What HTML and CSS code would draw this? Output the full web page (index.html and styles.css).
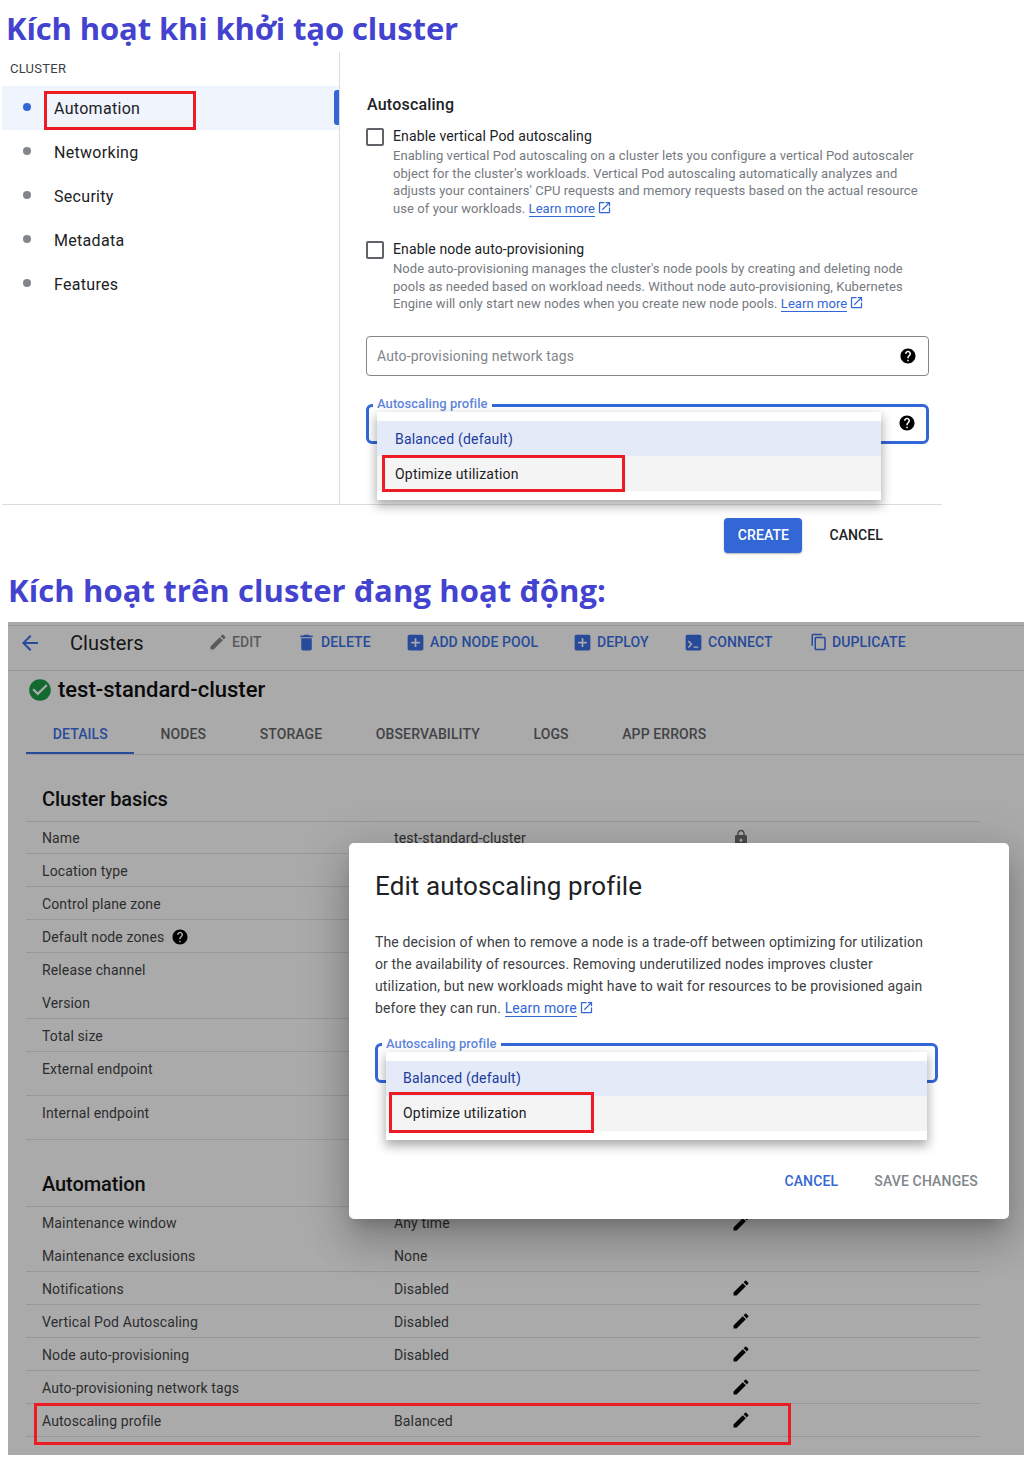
FILE: index.html
```html
<!doctype html>
<html>
    <head>
        <title>Autoscaling profile</title>
        <meta charset="utf-8" />
        <link rel="stylesheet" href="styles.css">
    </head>
    <body>
        <svg class="defs" width="0" height="0">
            <symbol id="i-edit" viewBox="0 0 24 24"><path d="M3 17.25V21h3.75L17.81 9.94l-3.75-3.75L3 17.25zM20.71 7.04a1 1 0 0 0 0-1.41l-2.34-2.34a1 1 0 0 0-1.41 0l-1.83 1.83 3.75 3.75 1.83-1.83z"/></symbol>
            <symbol id="i-delete" viewBox="0 0 24 24"><path d="M6 19c0 1.1.9 2 2 2h8c1.1 0 2-.9 2-2V7H6v12zM19 4h-3.5l-1-1h-5l-1 1H5v2h14V4z"/></symbol>
            <symbol id="i-add" viewBox="0 0 24 24"><path d="M19 3H5c-1.11 0-2 .9-2 2v14c0 1.1.89 2 2 2h14c1.1 0 2-.9 2-2V5c0-1.1-.9-2-2-2zm-2 10h-4v4h-2v-4H7v-2h4V7h2v4h4v2z"/></symbol>
            <symbol id="i-term" viewBox="0 0 24 24"><path fill-rule="evenodd" d="M5 3h14c1.1 0 2 .9 2 2v14c0 1.1-.9 2-2 2H5c-1.1 0-2-.9-2-2V5c0-1.1.9-2 2-2zm.5 8l3 3-3 3 1.200 1.200 4.200-4.200-4.200-4.200L5.500 11zM12 16.500V18h5.500v-1.500H12z"/></symbol>
            <symbol id="i-copy" viewBox="0 0 24 24"><path d="M16 1H4c-1.1 0-2 .9-2 2v14h2V3h12V1zm3 4H8c-1.1 0-2 .9-2 2v14c0 1.1.9 2 2 2h11c1.1 0 2-.9 2-2V7c0-1.1-.9-2-2-2zm0 16H8V7h11v14z"/></symbol>
            <symbol id="i-help" viewBox="0 0 24 24"><path d="M12 2C6.48 2 2 6.48 2 12s4.48 10 10 10 10-4.48 10-10S17.52 2 12 2zm1 17h-2v-2h2v2zm2.070-7.750l-.9.920C13.450 12.900 13 13.500 13 15h-2v-.5c0-1.100.450-2.100 1.170-2.830l1.240-1.260c.37-.36.590-.86.590-1.410 0-1.100-.9-2-2-2s-2 .9-2 2H8c0-2.210 1.790-4 4-4s4 1.790 4 4c0 .88-.36 1.680-.93 2.250z"/></symbol>
            <symbol id="i-open" viewBox="0 0 24 24"><path d="M19 19H5V5h7V3H5c-1.110 0-2 .9-2 2v14c0 1.100.89 2 2 2h14c1.100 0 2-.9 2-2v-7h-2v7zM14 3v2h3.590l-9.830 9.830 1.410 1.410L19 6.410V10h2V3h-7z"/></symbol>
            <symbol id="i-lock" viewBox="0 0 24 24"><path d="M18 8h-1V6c0-2.760-2.240-5-5-5S7 3.240 7 6v2H6c-1.100 0-2 .9-2 2v10c0 1.100.9 2 2 2h12c1.100 0 2-.9 2-2V10c0-1.100-.9-2-2-2zm-6 9c-1.100 0-2-.9-2-2s.9-2 2-2 2 .9 2 2-.9 2-2 2zm3.100-9H8.900V6c0-1.710 1.390-3.100 3.100-3.100 1.710 0 3.100 1.390 3.100 3.100v2z"/></symbol>
            <symbol id="i-back" viewBox="0 0 24 24"><path d="M20 11H7.830l5.590-5.590L12 4l-8 8 8 8 1.410-1.410L7.830 13H20v-2z"/></symbol>
            <symbol id="i-check" viewBox="0 0 24 24"><path d="M12 2C6.480 2 2 6.480 2 12s4.480 10 10 10 10-4.480 10-10S17.520 2 12 2zm-2 15l-5-5 1.410-1.410L10 14.170l7.590-7.590L19 8l-9 9z"/></symbol>
        </svg>

        <h1 class="caption caption-first">Kích hoạt khi khởi tạo cluster</h1>

        <section class="create">
            <aside class="side">
                <div class="side-title">CLUSTER</div>
                <ul class="side-nav">
                    <li class="side-item active"><span class="dot"></span>Automation<span class="mark mark-nav"></span></li>
                    <li class="side-item"><span class="dot"></span>Networking</li>
                    <li class="side-item"><span class="dot"></span>Security</li>
                    <li class="side-item"><span class="dot"></span>Metadata</li>
                    <li class="side-item"><span class="dot"></span>Features</li>
                </ul>
            </aside>
            <div class="form">
                <h2 class="form-title">Autoscaling</h2>
                <div class="check">
                    <span class="box"></span>
                    <div>
                        <div class="check-label">Enable vertical Pod autoscaling</div>
                        <p class="check-desc"><span>Enabling vertical Pod autoscaling on a cluster lets you configure a vertical Pod autoscaler object for the cluster's workloads. Vertical Pod autoscaling automatically analyzes and adjusts your containers' CPU requests and memory requests based on the actual resource use of your workloads.</span> <a class="learn">Learn more</a><svg class="icon open"><use href="#i-open"/></svg></p>
                    </div>
                </div>
                <div class="check check-second">
                    <span class="box"></span>
                    <div>
                        <div class="check-label">Enable node auto-provisioning</div>
                        <p class="check-desc"><span>Node auto-provisioning manages the cluster's node pools by creating and deleting node pools as needed based on workload needs. Without node auto-provisioning, Kubernetes Engine will only start new nodes when you create new node pools.</span> <a class="learn">Learn more</a><svg class="icon open"><use href="#i-open"/></svg></p>
                    </div>
                </div>
                <div class="field">
                    <span class="placeholder">Auto-provisioning network tags</span>
                    <svg class="icon help"><use href="#i-help"/></svg>
                </div>
                <div class="select">
                    <span class="select-label">Autoscaling profile</span>
                    <svg class="icon help"><use href="#i-help"/></svg>
                    <div class="menu">
                        <div class="menu-item selected">Balanced (default)</div>
                        <div class="menu-item hover">Optimize utilization</div>
                        <span class="mark mark-option"></span>
                    </div>
                </div>
            </div>
        </section>
        <footer class="create-foot">
            <button class="btn-create">CREATE</button>
            <button class="btn-cancel">CANCEL</button>
        </footer>

        <h1 class="caption caption-second">Kích hoạt trên cluster đang hoạt động:</h1>

        <section class="console">
            <div class="toolbar">
                <svg class="icon back"><use href="#i-back"/></svg>
                <span class="toolbar-title">Clusters</span>
                <span class="tool tool-edit"><svg class="icon"><use href="#i-edit"/></svg>EDIT</span>
                <span class="tool tool-delete"><svg class="icon"><use href="#i-delete"/></svg>DELETE</span>
                <span class="tool tool-pool"><svg class="icon"><use href="#i-add"/></svg>ADD NODE POOL</span>
                <span class="tool tool-deploy"><svg class="icon"><use href="#i-add"/></svg>DEPLOY</span>
                <span class="tool tool-connect"><svg class="icon"><use href="#i-term"/></svg>CONNECT</span>
                <span class="tool tool-copy"><svg class="icon"><use href="#i-copy"/></svg>DUPLICATE</span>
            </div>
            <div class="cluster-name"><svg class="icon ok"><use href="#i-check"/></svg>test-standard-cluster</div>
            <div class="tabs">
                <span class="tab on">DETAILS</span>
                <span class="tab">NODES</span>
                <span class="tab">STORAGE</span>
                <span class="tab">OBSERVABILITY</span>
                <span class="tab">LOGS</span>
                <span class="tab">APP ERRORS</span>
            </div>

            <div class="details">
                <h3 class="details-title">Cluster basics</h3>
                <div class="row short"><span>Name</span><span>test-standard-cluster</span><svg class="icon lock"><use href="#i-lock"/></svg></div>
                <div class="row"><span>Location type</span></div>
                <div class="row"><span>Control plane zone</span></div>
                <div class="row"><span class="with-help">Default node zones<svg class="icon help"><use href="#i-help"/></svg></span></div>
                <div class="row plain"><span>Release channel</span></div>
                <div class="row"><span>Version</span></div>
                <div class="row"><span>Total size</span></div>
                <div class="row tall"><span>External endpoint</span></div>
                <div class="row tall"><span>Internal endpoint</span></div>

                <h3 class="details-title">Automation</h3>
                <div class="row plain short"><span>Maintenance window</span><span>Any time</span><svg class="icon pen"><use href="#i-edit"/></svg></div>
                <div class="row"><span>Maintenance exclusions</span><span>None</span></div>
                <div class="row"><span>Notifications</span><span>Disabled</span><svg class="icon pen"><use href="#i-edit"/></svg></div>
                <div class="row"><span>Vertical Pod Autoscaling</span><span>Disabled</span><svg class="icon pen"><use href="#i-edit"/></svg></div>
                <div class="row"><span>Node auto-provisioning</span><span>Disabled</span><svg class="icon pen"><use href="#i-edit"/></svg></div>
                <div class="row"><span>Auto-provisioning network tags</span><span></span><svg class="icon pen"><use href="#i-edit"/></svg></div>
                <div class="row"><span>Autoscaling profile</span><span>Balanced</span><svg class="icon pen"><use href="#i-edit"/></svg><span class="mark mark-row"></span></div>
            </div>

            <div class="dialog">
                <h2 class="dialog-title">Edit autoscaling profile</h2>
                <p class="dialog-text"><span>The decision of when to remove a node is a trade-off between optimizing for utilization or the availability of resources. Removing underutilized nodes improves cluster utilization, but new workloads might have to wait for resources to be provisioned again before they can run.</span> <a class="learn">Learn more</a><svg class="icon open"><use href="#i-open"/></svg></p>
                <div class="select select-dialog">
                    <span class="select-label">Autoscaling profile</span>
                    <div class="menu">
                        <div class="menu-item selected">Balanced (default)</div>
                        <div class="menu-item hover">Optimize utilization</div>
                        <span class="mark mark-option"></span>
                    </div>
                </div>
                <div class="dialog-actions">
                    <span class="dialog-cancel">CANCEL</span>
                    <span class="dialog-save">SAVE CHANGES</span>
                </div>
            </div>
        </section>
    </body>
</html>
```

FILE: styles.css
```css
html, body {
    margin: 0px;
    padding: 0px;
}

body {
    width: 1024px;
    height: 1458px;
    overflow: hidden;
    background-color: white;
    font-family: Roboto, sans-serif;
    font-size: 14px;
    letter-spacing: 0.13px;
    color: #202124;
}

.defs {
    position: absolute;
}

.icon {
    fill: currentColor;
    flex: none;
}

.caption {
    margin: 0px;
    font-family: "Open Sans", sans-serif;
    font-size: 31px;
    font-weight: 700;
    color: #4343cf;
    white-space: nowrap;
}

.caption-first {
    height: 52px;
    line-height: 56px;
    padding-left: 6px;
    letter-spacing: -0.13px;
}

.caption-second {
    height: 57px;
    line-height: 51px;
    padding-left: 8px;
    letter-spacing: 0.1px;
}

/* red annotations */
.mark {
    position: absolute;
    border: 3px solid #ed1c24;
    box-sizing: border-box;
    pointer-events: none;
}

.mark-nav {
    left: 42px;
    top: 5px;
    width: 152px;
    height: 39px;
}

.mark-option {
    left: 5px;
    top: 43px;
    width: 243px;
    height: 37px;
}

.mark-row {
    left: 8px;
    top: -1px;
    width: 757px;
    height: 42px;
}

/* create form */
.create {
    display: flex;
    height: 452px;
    margin-left: 2px;
}

.side {
    width: 337px;
    border-right: 1px solid #dadce0;
}

.side-title {
    margin: 9px 0px 10px 8px;
    font-size: 13px;
    line-height: 15px;
    letter-spacing: 0.25px;
    color: #3c4043;
}

.side-nav {
    list-style: none;
    margin: 0px;
    padding: 0px;
}

.side-item {
    position: relative;
    display: flex;
    align-items: center;
    height: 44px;
    font-size: 16px;
    letter-spacing: 0.3px;
    color: #202124;
}

.side-item.active {
    background-color: #f0f4fd;
}

.side-item.active::after {
    content: "";
    position: absolute;
    right: 0px;
    top: 4px;
    width: 5px;
    height: 35px;
    background-color: #3367d6;
    border-radius: 3px 0px 0px 3px;
}

.dot {
    width: 8px;
    height: 8px;
    margin: -3px 23px 0px 21px;
    border-radius: 50%;
    background-color: #80868b;
}

.active .dot {
    background-color: #3367d6;
}

.form {
    flex: 1;
    padding: 42px 0px 0px 27px;
}

.form-title {
    margin: 0px 0px 12px;
    font-size: 16px;
    line-height: 21px;
    font-weight: 500;
    letter-spacing: 0.2px;
    color: #202124;
}

.check {
    display: flex;
    gap: 9px;
    width: 560px;
}

.check-second {
    margin-top: 22px;
}

.box {
    width: 18px;
    height: 18px;
    box-sizing: border-box;
    margin: 1px 0px 0px -1px;
    flex: none;
    border: 2px solid #5f6368;
    border-radius: 2px;
}

.check-label {
    line-height: 18px;
}

.check-desc {
    margin: 2px 0px 0px;
    width: 532px;
    font-size: 13px;
    line-height: 17.7px;
    letter-spacing: 0.07px;
    color: #757a7f;
}

.learn {
    color: #3367d6;
    border-bottom: 1px solid #3367d6;
}

.open {
    width: 15px;
    height: 15px;
    margin-left: 2px;
    vertical-align: -2px;
    color: #3367d6;
}

.field, .select {
    position: relative;
    display: flex;
    align-items: center;
    justify-content: space-between;
    box-sizing: border-box;
    width: 563px;
    height: 40px;
    margin-left: -1px;
    padding: 0px 11px 0px 10px;
}

.field {
    margin-top: 23px;
    border: 1px solid #80868b;
    border-radius: 4px;
}

.placeholder {
    color: #80868b;
}

.help {
    width: 18px;
    height: 18px;
    color: black;
    margin-left: auto;
}

.select {
    margin-top: 28px;
    padding-right: 10px;
    padding-bottom: 2px;
    border: 3px solid #3367d6;
    border-radius: 6px;
}

.select-label {
    position: absolute;
    left: 4px;
    top: -10px;
    padding: 0px 4px 0px 4px;
    background-color: white;
    font-size: 13px;
    line-height: 14px;
    font-weight: 500;
    letter-spacing: 0.05px;
    color: #5f86db;
}

.menu {
    position: absolute;
    left: 8px;
    top: 5px;
    right: 45px;
    padding: 9px 0px;
    background-color: white;
    box-shadow: 0px 5px 10px 1px rgba(0, 0, 0, 0.32);
}

.menu-item {
    height: 35px;
    line-height: 37px;
    padding-left: 18px;
    letter-spacing: 0.2px;
    color: #202124;
    background-color: #f4f4f4;
}

.menu-item.selected {
    background-color: #e4eaf7;
    color: #1a3a9e;
}

.create-foot {
    display: flex;
    justify-content: flex-end;
    align-items: center;
    gap: 27px;
    box-sizing: border-box;
    width: 940px;
    height: 61px;
    margin-left: 2px;
    padding: 0px 59px 0px 0px;
    border-top: 1px solid #dadce0;
}

.create-foot button {
    font-family: Roboto, sans-serif;
    font-size: 14px;
    font-weight: 500;
    letter-spacing: 0.1px;
    border: none;
    padding: 0px;
    background: none;
}

.create-foot .btn-create {
    width: 78px;
    height: 35px;
    color: white;
    background-color: #3367d6;
    border-radius: 4px;
    box-shadow: 0px 1px 2px rgba(0, 0, 0, 0.3);
}

.create-foot .btn-cancel {
    color: #202124;
}

/* dimmed console */
.console {
    position: relative;
    box-sizing: border-box;
    width: 1016px;
    height: 833px;
    margin-left: 8px;
    padding-top: 3px;
    background-color: #aaaaaa;
    color: #2c2d2f;
}

.toolbar {
    display: flex;
    align-items: center;
    box-sizing: border-box;
    height: 46px;
    padding-left: 10px;
    padding-bottom: 11px;
    border-top: 1px solid #979797;
    border-bottom: 1px solid #979797;
    letter-spacing: 0.1px;
    color: #284a9a;
    font-weight: 500;
}

.back {
    width: 24px;
    height: 24px;
    margin-right: 28px;
}

.toolbar-title {
    width: 138px;
    font-size: 20px;
    font-weight: 400;
    letter-spacing: 0px;
    color: #151617;
}

.tool {
    display: flex;
    align-items: center;
    gap: 4px;
    margin-top: -1px;
    white-space: nowrap;
}

.tool .icon {
    width: 21px;
    height: 21px;
}

.tool-edit {
    color: #5a5a5a;
    width: 88px;
}

.tool-edit .icon {
    width: 20px;
    height: 20px;
}

.tool-delete {
    width: 109px;
}

.tool-pool {
    width: 167px;
}

.tool-deploy {
    width: 111px;
}

.tool-connect {
    width: 127px;
}

.tool-copy .icon {
    width: 18px;
    height: 18px;
}

.cluster-name {
    display: flex;
    align-items: center;
    gap: 5px;
    height: 37px;
    padding-left: 19px;
    font-size: 22px;
    font-weight: 500;
    letter-spacing: 0px;
    color: #0a0a0a;
}

.ok {
    width: 26px;
    height: 26px;
    color: #136a30;
}

.tabs {
    display: flex;
    height: 41px;
    box-sizing: border-box;
    margin: 6px 0px 0px 18px;
    border-bottom: 1px solid #979797;
    font-weight: 500;
    letter-spacing: 0.1px;
    color: #424346;
}

.tab {
    padding: 0px 26.800px;
    line-height: 41px;
    height: 40px;
    box-sizing: border-box;
}

.tab.on {
    padding-right: 25.800px;
    color: #2a4a9a;
    border-bottom: 2px solid #2a4a9a;
}

.details {
    width: 954px;
    margin-left: 18px;
}

.details-title {
    margin: 0px;
    height: 67px;
    box-sizing: border-box;
    padding: 32px 0px 0px 16px;
    font-size: 20px;
    line-height: 24px;
    font-weight: 500;
    letter-spacing: -0.1px;
    color: #0d0d0e;
    border-bottom: 1px solid #979797;
}

.row {
    position: relative;
    display: grid;
    grid-template-columns: 352px 339px 16px;
    align-items: center;
    box-sizing: border-box;
    height: 33px;
    padding-top: 1px;
    padding-left: 16px;
    border-bottom: 1px solid #979797;
}

.row.short {
    height: 32px;
    padding-top: 0px;
}

.row.plain {
    padding-top: 0px;
    border-bottom: none;
}

.row.tall {
    height: 44px;
    padding-top: 0px;
    padding-bottom: 9px;
}

.with-help {
    display: flex;
    align-items: center;
    gap: 7px;
}

.with-help .help {
    margin-left: 0px;
}

.lock {
    width: 18px;
    height: 18px;
    margin-left: -1px;
    color: #4a4a4a;
}

.pen {
    width: 20px;
    height: 20px;
    margin: -1px 0px 0px -2px;
    color: #050505;
}

.dialog {
    position: absolute;
    left: 341px;
    top: 221px;
    box-sizing: border-box;
    width: 660px;
    height: 376px;
    padding: 26px 26px 0px;
    background-color: white;
    border-radius: 5px;
    box-shadow: 0px 11px 15px -7px rgba(0, 0, 0, 0.2), 0px 24px 38px 3px rgba(0, 0, 0, 0.14), 0px 9px 46px 8px rgba(0, 0, 0, 0.12);
}

.dialog-title {
    margin: 0px;
    font-size: 26px;
    line-height: 34px;
    font-weight: 400;
    letter-spacing: 0.1px;
    color: #202124;
}

.dialog-text {
    margin: 28px 0px 0px;
    width: 560px;
    line-height: 22px;
    letter-spacing: 0.13px;
    color: #3c4043;
}

.select-dialog {
    margin: 24px 0px 0px;
}

.select-dialog .select-label {
    top: -9px;
}

.select-dialog .menu {
    top: 6px;
    right: 8px;
}

.select-dialog .menu-item {
    padding-left: 17px;
    line-height: 35px;
}

.select-dialog .mark-option {
    left: 3px;
    top: 40px;
    width: 205px;
    height: 41px;
}

.dialog-actions {
    display: flex;
    justify-content: flex-end;
    gap: 36px;
    margin-top: 90px;
    padding-right: 5px;
    font-weight: 500;
    letter-spacing: 0.15px;
}

.dialog-cancel {
    color: #3367d6;
}

.dialog-save {
    color: #80868b;
}
```
